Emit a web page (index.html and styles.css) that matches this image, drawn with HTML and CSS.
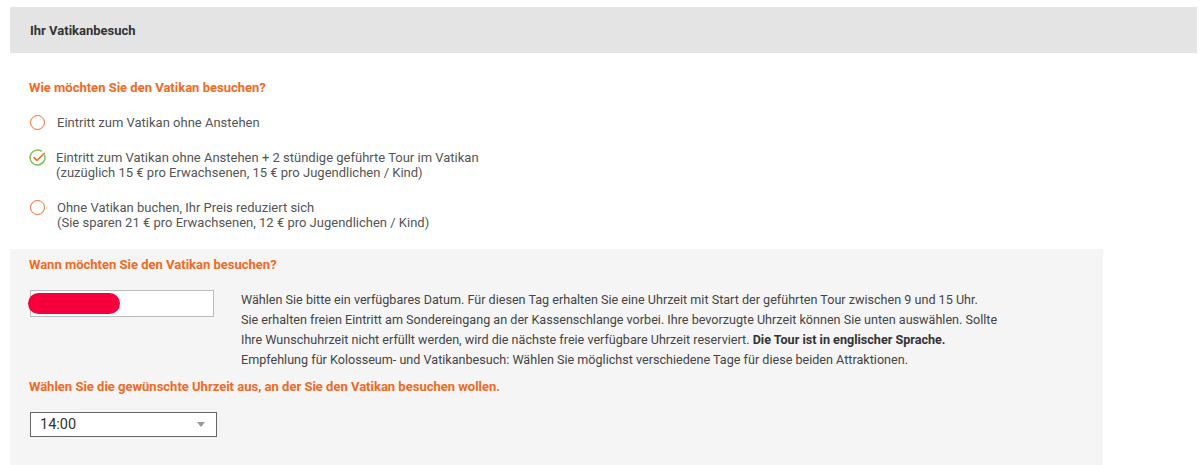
FILE: index.html
```html
<!DOCTYPE html>
<html lang="de">
<head>
  <meta charset="UTF-8">
  <title>Ihr Vatikanbesuch</title>
  <link rel="stylesheet" href="styles.css">
</head>
<body>

  <div class="section-header">Ihr Vatikanbesuch</div>

  <!-- Art des Besuchs -->
  <div class="visit-type">
    <h3 class="label">Wie möchten Sie den Vatikan besuchen?</h3>
    <ul class="options">
      <li class="option">
        <span class="radio"></span>
        <span class="option-text">Eintritt zum Vatikan ohne Anstehen</span>
      </li>
      <li class="option checked">
        <svg class="check" width="17" height="17" viewBox="0 0 16 16">
          <path d="M14.7 5.9 A7 7 0 1 1 11.5 1.9" fill="none" stroke="#7cc35a" stroke-width="1.4" stroke-linecap="round"/>
          <path d="M4.8 8.1 L7.5 10.8 L14.4 4" fill="none" stroke="#ee6a2c" stroke-width="1.5" stroke-linecap="round" stroke-linejoin="round"/>
        </svg>
        <span class="option-text">Eintritt zum Vatikan ohne Anstehen + 2 stündige geführte Tour im Vatikan<br>(zuzüglich 15 € pro Erwachsenen, 15 € pro Jugendlichen / Kind)</span>
      </li>
      <li class="option">
        <span class="radio"></span>
        <span class="option-text">Ohne Vatikan buchen, Ihr Preis reduziert sich<br>(Sie sparen 21 € pro Erwachsenen, 12 € pro Jugendlichen / Kind)</span>
      </li>
    </ul>
  </div>

  <!-- Datum und Uhrzeit -->
  <div class="visit-date">
    <h3 class="label">Wann möchten Sie den Vatikan besuchen?</h3>
    <div class="date-row">
      <div class="date-field"><span class="redact"></span></div>
      <p class="date-info">
        Wählen Sie bitte ein verfügbares Datum. Für diesen Tag erhalten Sie eine Uhrzeit mit Start der geführten Tour zwischen 9 und 15 Uhr.<br>
        Sie erhalten freien Eintritt am Sondereingang an der Kassenschlange vorbei. Ihre bevorzugte Uhrzeit können Sie unten auswählen. Sollte<br>
        Ihre Wunschuhrzeit nicht erfüllt werden, wird die nächste freie verfügbare Uhrzeit reserviert. <strong>Die Tour ist in englischer Sprache.</strong><br>
        Empfehlung für Kolosseum- und Vatikanbesuch: Wählen Sie möglichst verschiedene Tage für diese beiden Attraktionen.
      </p>
    </div>
    <h3 class="label">Wählen Sie die gewünschte Uhrzeit aus, an der Sie den Vatikan besuchen wollen.</h3>
    <div class="select-box">
      <span>14:00</span>
      <span class="caret"></span>
    </div>
  </div>

</body>
</html>
```

FILE: styles.css
```css
body {
  margin: 0;
  background: #fff;
  font-family: Roboto, "Liberation Sans", sans-serif;
  font-size: 13px;
  color: #555;
}

.section-header {
  margin: 7px 3px 0 10px;
  height: 46px;
  padding-left: 20px;
  display: flex;
  align-items: center;
  background: #e4e4e4;
  color: #333;
  font-weight: bold;
}

.label {
  margin: 0;
  font-size: 13px;
  line-height: 16px;
  font-weight: bold;
  color: #ef6a22;
}

.visit-type {
  padding: 27px 0 19px 29px;
}

.options {
  list-style: none;
  margin: 19px 0 0;
  padding: 0;
  display: flex;
  flex-direction: column;
  gap: 20px;
}

.option {
  display: flex;
  align-items: flex-start;
  gap: 12px;
  line-height: 15px;
}

.radio {
  flex: none;
  width: 13px;
  height: 13px;
  margin: 0 0 0 1px;
  border: 1.7px solid #ee6a2c;
  border-radius: 50%;
}

.check {
  flex: none;
  margin: -1px -2px 0 0;
}

.option-text {
  color: #555;
}

.visit-date {
  margin-left: 10px;
  width: 1055px;
  min-height: 215px;
  padding: 8px 19px 0;
  background: #f5f5f5;
}

.date-row {
  display: flex;
  align-items: flex-start;
  gap: 27px;
  margin: 17px 0 9px 1px;
}

.date-field {
  flex: none;
  width: 182px;
  height: 25px;
  border: 1px solid #bbb;
  background: #fff;
  display: flex;
  align-items: center;
}

.redact {
  width: 92px;
  height: 21px;
  margin-left: -3px;
  border-radius: 11px;
  background: #f5003c;
}

.date-info {
  margin: 0;
  font-size: 12.6px;
  line-height: 20px;
  color: #444;
  white-space: nowrap;
}

.date-info strong {
  color: #333;
}

.select-box {
  margin: 17px 0 0 1px;
  width: 176px;
  height: 23px;
  padding: 0 0 0 9px;
  border: 1px solid #666;
  background: #fff;
  display: flex;
  align-items: center;
  justify-content: space-between;
  font-size: 14.5px;
  color: #333;
}

.caret {
  margin-right: 11px;
  border-left: 4px solid transparent;
  border-right: 4px solid transparent;
  border-top: 5px solid #999;
}
```
